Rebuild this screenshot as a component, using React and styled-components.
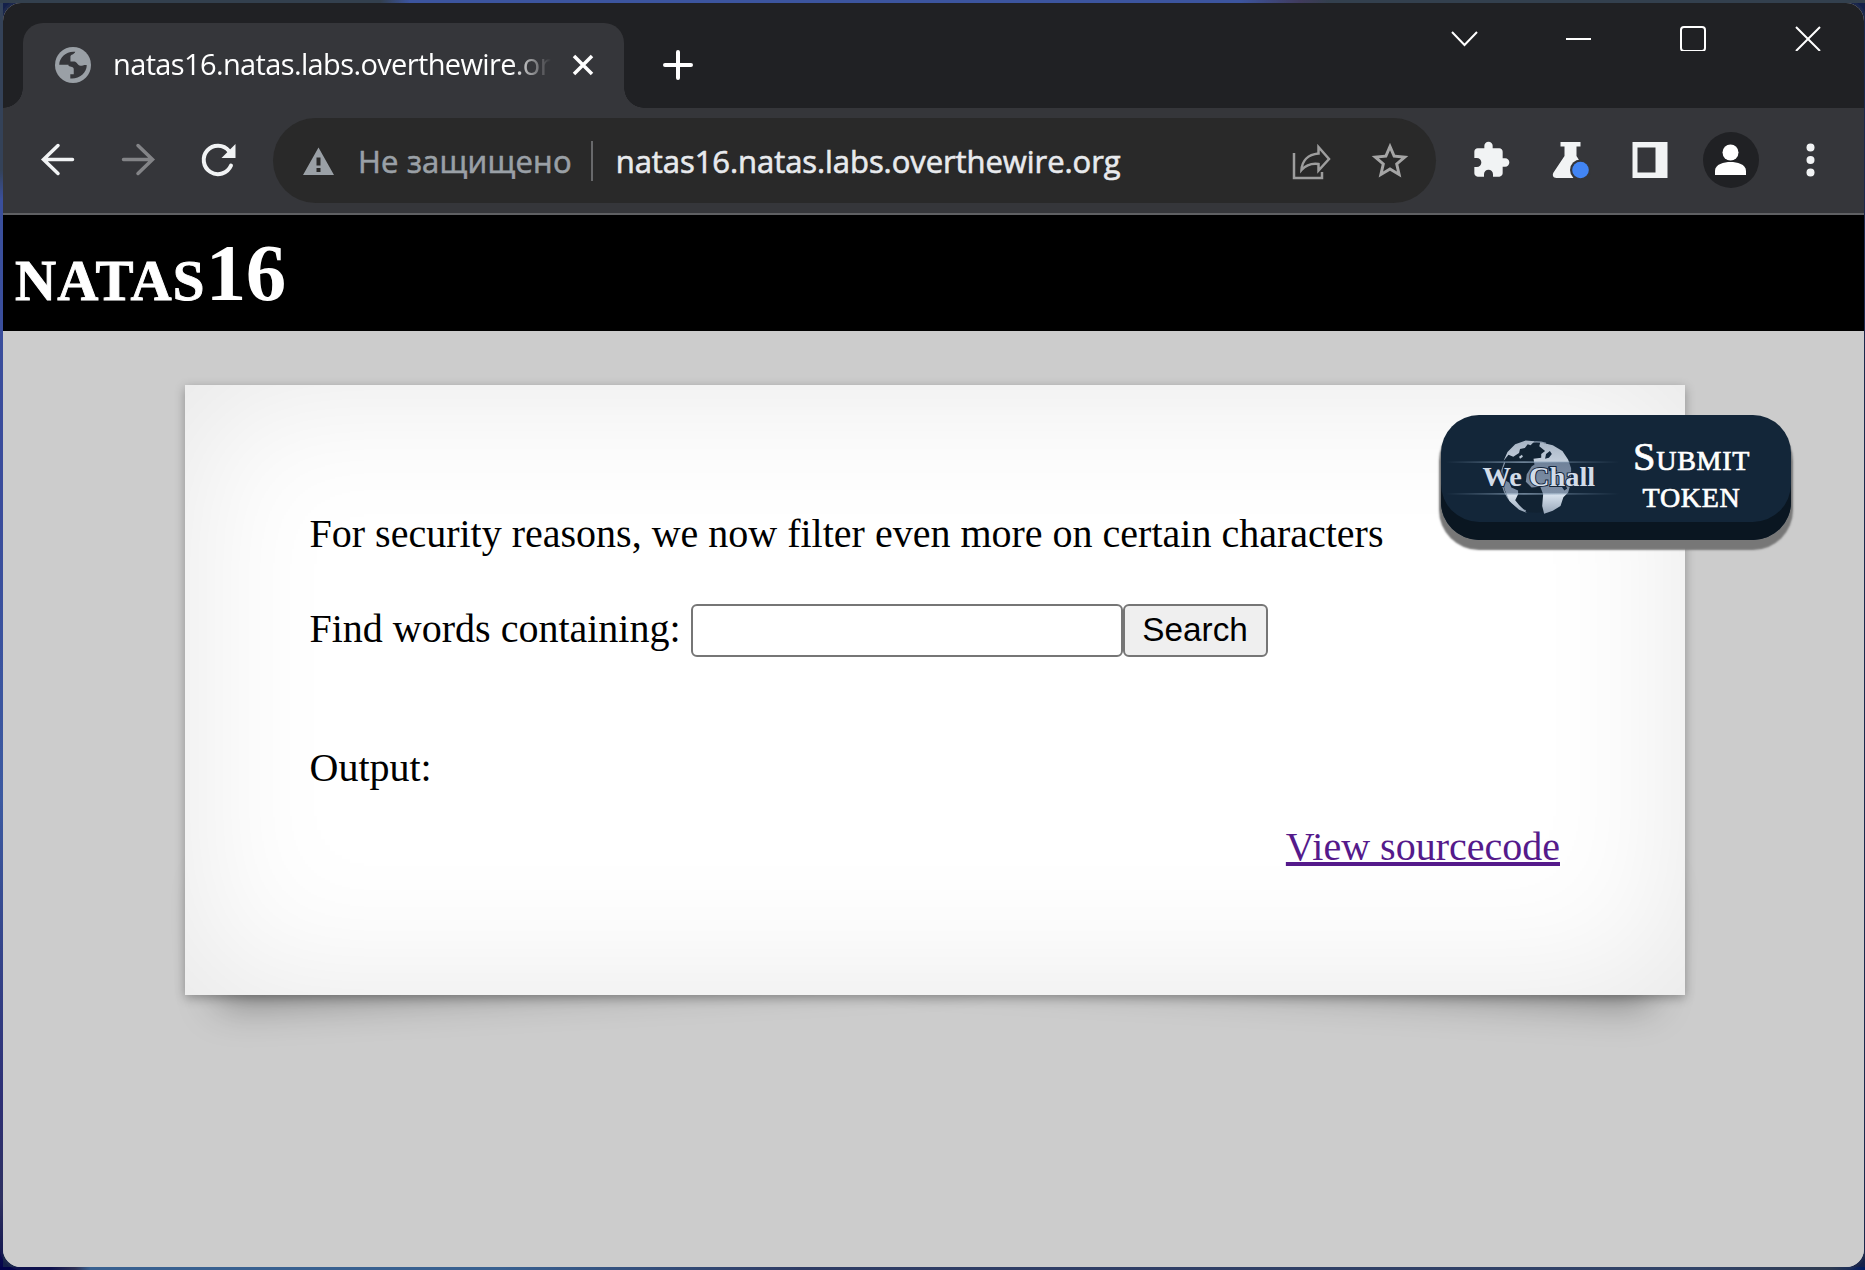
import React from 'react';
import styled, { createGlobalStyle } from 'styled-components';

const Global = createGlobalStyle`
  * { box-sizing: border-box; }
  body { margin: 0; }
`;

const Desktop = styled.div`
  height: 1270px;
  width: 1865px;
  padding: 3px 1px 3px 3px;
  overflow: hidden;
  background:
    linear-gradient(90deg, #33404c 0 380px, #3f5cb8 410px 1240px, #453a60 1300px, #33404c 1330px) 0 0 / 100% 3px no-repeat,
    linear-gradient(90deg, #02024a 0 50px, #2d2c55 75px, #3a6ba5 90px 500px, #2d3a6a 800px, #30446f 1700px, #2e3a50 1830px, #001a60) 0 100% / 100% 3px no-repeat,
    linear-gradient(180deg, #34435a 0 170px, #3d55b5 200px, #3c50b4 500px, #3f63bb 800px, #2c2a80 1100px, #2d2c66 1200px, #02024a) 0 0 / 3px 100% no-repeat,
    #14204a;
`;
const Window = styled.div`
  display: flex;
  flex-direction: column;
  height: 1264px;
  border-radius: 18px;
  overflow: hidden;
  background: #ccc;
  box-shadow: 0 0 0 3px #33405240;
`;
const TabStrip = styled.div`
  display: flex;
  height: 105px;
  padding: 20px 0 0 20px;
  background: #202124;
`;
const Tab = styled.div`
  position: relative;
  display: flex;
  align-items: center;
  width: 601px;
  height: 85px;
  padding: 0 29px 2px 32px;
  border-radius: 20px 20px 0 0;
  background: #35363a;
  &::before, &::after {
    content: '';
    position: absolute;
    bottom: 0;
    width: 20px;
    height: 20px;
  }
  &::before { left: -20px; background: radial-gradient(circle at 0 0, transparent 19.5px, #35363a 20px); }
  &::after { right: -20px; background: radial-gradient(circle at 100% 0, transparent 19.5px, #35363a 20px); }
`;
const TabTitle = styled.div`
  width: 442px;
  margin: -2px 17px 0 22px;
  overflow: hidden;
  white-space: nowrap;
  font: 29px/40px 'Open Sans', 'Noto Sans', sans-serif;
  letter-spacing: -0.63px;
  color: #fff;
  mask-image: linear-gradient(90deg, #000 398px, transparent 438px);
`;
const NewTab = styled.div`
  display: flex;
  align-items: center;
  margin-left: 38px;
  padding-bottom: 2px;
`;
const Controls = styled.div`
  display: flex;
  gap: 86px;
  height: 30px;
  margin: 0 43px 0 auto;
`;
const Toolbar = styled.div`
  display: flex;
  align-items: center;
  height: 107px;
  padding: 0 0 0 35px;
  background: #35363a;
  border-bottom: 2px solid #5f6063;
`;
const Nav = styled.div`
  display: flex;
  flex: none;
  gap: 40px;
  width: 235px;
  padding-bottom: 2px;
`;
const Omnibox = styled.div`
  display: flex;
  flex: none;
  align-items: center;
  width: 1163px;
  height: 85px;
  padding: 0 24px 0 25px;
  border-radius: 43px;
  background: #292929;
`;
const UrlText = styled.span`
  font: 31px/44px 'Open Sans', 'Noto Sans', sans-serif;
  letter-spacing: ${(p) => p.$spacing}px;
  color: ${(p) => p.$color};
  -webkit-text-stroke: 0.6px ${(p) => p.$color};
  white-space: nowrap;
`;
const Warning = styled.div`
  display: flex;
  width: 60px;
`;
const Separator = styled.div`
  width: 2px;
  height: 40px;
  margin: 0 23px 0 19px;
  background: #68696b;
`;
const OmniActions = styled.div`
  display: flex;
  align-items: center;
  gap: 37px;
  margin-left: auto;
`;
const Extensions = styled.div`
  display: flex;
  align-items: center;
  gap: 40px;
  margin-left: 35px;
  padding-bottom: 1px;
`;
const Avatar = styled.div`
  display: flex;
  width: 56px;
  height: 56px;
  margin: 0 -8px;
  border-radius: 50%;
  background: #202124;
`;
const Heading = styled.h1`
  height: 116px;
  margin: 0;
  padding-left: 12px;
  background: #000;
  color: #fff;
  font: bold 82px/115px 'Liberation Serif', serif;
  font-variant: small-caps;
  letter-spacing: 1.2px;
  -webkit-text-stroke: 0.9px #fff;
  text-transform: lowercase;
`;
const Level = styled.span`
  font-size: 81px;
  letter-spacing: -0.5px;
  -webkit-text-stroke: 0;
`;
const Page = styled.main`
  position: relative;
  z-index: 0;
  flex: 1;
  padding: 54px 179px 0 182px;
  background: #ccc;
`;
const Card = styled.section`
  position: relative;
  height: 610px;
  padding: 126px 125px 0 124.5px;
  background: #fff;
  font: 40px/46px 'Liberation Serif', serif;
  color: #000;
  box-shadow: 0 2.5px 10px rgba(0, 0, 0, 0.3), 0 0 150px rgba(0, 0, 0, 0.1) inset;
  &::before, &::after {
    content: '';
    position: absolute;
    z-index: -2;
    bottom: 37px;
    width: 50%;
    height: 20%;
    box-shadow: 0 27px 40px rgba(0, 0, 0, 0.38);
  }
  &::before { left: 30px; transform: rotate(-3deg); }
  &::after { right: 30px; transform: rotate(3deg); }
`;
const CardBody = styled.div`
  display: flex;
  flex-direction: column;
`;
const Form = styled.form`
  display: flex;
  align-items: center;
  margin-top: 47px;
`;
const FieldLabel = styled.label`
  padding-bottom: 3px;
`;
const Field = styled.input`
  width: 432px;
  height: 53px;
  margin-left: 10px;
  border: 2px solid #767676;
  border-radius: 6px;
  background: #fff;
`;
const Search = styled.button`
  width: 145px;
  height: 53px;
  padding: 0 0 2px;
  border: 2px solid #767676;
  border-radius: 6px;
  background: #efefef;
  color: #000;
  font: 33.33px/44px 'Liberation Sans', sans-serif;
`;
const Output = styled.div`
  margin-top: 88px;
`;
const Source = styled.a`
  align-self: flex-end;
  margin-top: 33px;
  color: #551a8b;
  text-decoration: underline;
`;
const Submit = styled.div`
  position: absolute;
  top: 84px;
  left: 1438px;
  z-index: 2;
  display: flex;
  align-items: center;
  width: 350px;
  height: 125px;
  border-radius: 38px;
  background: #132639;
  box-shadow: inset 0 -18px 0 #0a1621, 0 8px 2px 2px #777;
`;
const SubmitText = styled.div`
  width: 140px;
  margin: -5px 32px 0 auto;
  color: #fff;
  text-align: center;
  font: 40.5px/37px 'Liberation Serif', serif;
  font-variant: small-caps;
  letter-spacing: 0.7px;
  -webkit-text-stroke: 0.7px #fff;
`;

const Icon = ({ w = 40, h = w, box, children, ...rest }) => (
  <svg width={w} height={h} viewBox={box || `0 0 ${w} ${h}`} fill="none" {...rest}>{children}</svg>
);

const Logo = () => (
  <Icon w={190} h={105}>
    <defs>
      <linearGradient id="land" x1="0" y1="16" x2="0" y2="89" gradientUnits="userSpaceOnUse">
        <stop offset="0" stopColor="#a9b6c6" /><stop offset=".28" stopColor="#c3cedb" /><stop offset=".285" stopColor="#70829a" /><stop offset=".725" stopColor="#7f90a6" /><stop offset=".73" stopColor="#dbe5f0" /><stop offset="1" stopColor="#9aa9bb" />
      </linearGradient>
      <linearGradient id="flare" x1="5" x2="185" y1="0" y2="0" gradientUnits="userSpaceOnUse">
        <stop offset="0" stopColor="#7892ad" stopOpacity="0" /><stop offset=".45" stopColor="#93a9bf" stopOpacity=".7" /><stop offset="1" stopColor="#7892ad" stopOpacity="0" />
      </linearGradient>
    </defs>
    <circle cx="99" cy="52.500" r="36.500" fill="#10202f" fillOpacity=".6" />
    <path stroke="#8797aa" strokeWidth="1.200" d="M66 37a36.500 36.500 0 0 0 22 50M89 17a36.500 36.500 0 0 1 20 0" />
    <path fill="url(#land)" d="M65 35l4-9 8-8 11-4 9 1-4 4-3-1-3 4-5 1-1 4-6 4-5-2zM81 31l3-2 1 2-3 2zM103 16l13 3 10 6 6 9 3 9 0 14-3 11-5 5-3 9-8 5-9 3-2-8 1-12-3-8-9 1-6-6 1-8 5-8 3-2-1-6 8-1 0-4 4-3-6-5zM64 45l2 10 5 3 2 5 7 3 0 4-3 6 4 5 8 8-8-3-10-9-5-12-2-10z" />
    <path fill="#13263a" d="M109 28l4-3 2 3-3 4-4 1zM111 41l7 1 3 4-5-1-4 1zM124 60l4-2 3 6-3 2z" />
    <path stroke="url(#flare)" strokeWidth="1.800" d="M5 36.500h180M5 69.500h180" />
    <text x="43" y="61.500" fill="#d2dce8" stroke="#15253a" strokeWidth="2" paintOrder="stroke" fontFamily="'Liberation Serif', serif" fontWeight="bold" fontSize="28" textLength="117" lengthAdjust="spacingAndGlyphs">We Chall</text>
  </Icon>
);

export default function App() {
  return (
    <Desktop>
      <Global />
      <Window>
        <TabStrip>
          <Tab>
            <Icon w={36} box="0 0 24 24">
              <circle cx="12" cy="12" r="12" fill="#9aa0a6" />
              <path fill="#35363a" d="M2.800 11.800C3 6.500 8 2.500 13.500 3.200 13 5 10.300 5 10.300 6.500V9.700H13c1.500 0 2 2.800 4 2.800 1.500 0 3-.9 4.200-.3C21 17.500 16 21.600 10.200 21v-2.800h2.300v-3.400C12.500 13 10.500 13.500 9 12.500v-.7z" />
            </Icon>
            <TabTitle>natas16.natas.labs.overthewire.org</TabTitle>
            <Icon w={22}><path stroke="#fff" strokeWidth="3.5" d="M2 2l18 18M20 2L2 20" /></Icon>
          </Tab>
          <NewTab><Icon w={32}><path stroke="#fff" strokeWidth="4" strokeLinecap="round" d="M16 3v26M3 16h26" /></Icon></NewTab>
          <Controls>
            <Icon w={28}><path stroke="#fff" strokeWidth="2" d="M1 9l12.500 13L26 9" /></Icon>
            <Icon w={28}><path stroke="#fff" strokeWidth="2" d="M1 16h25" /></Icon>
            <Icon w={28}><rect x="2" y="4" width="24" height="24" rx="3" stroke="#fff" strokeWidth="2" /></Icon>
            <Icon w={28}><path stroke="#fff" strokeWidth="2" d="M3 4l24 24M27 4L3 28" /></Icon>
          </Controls>
        </TabStrip>
        <Toolbar>
          <Nav>
            <Icon w={40}><path stroke="#f1f3f4" strokeWidth="3.500" strokeLinecap="round" d="M34.500 19.500H6M20 5.500l-14.500 14L20 33.500" /></Icon>
            <Icon w={40}><path stroke="#838487" strokeWidth="3.500" strokeLinecap="round" d="M5.500 19.500H34M20 5.500l14.500 14L20 33.500" /></Icon>
            <Icon w={40}><path stroke="#f1f3f4" strokeWidth="4" strokeLinecap="round" d="M31 11A14.200 14.200 0 1 0 33 25.500" /><path fill="#f1f3f4" d="M37.500 4v14h-14z" /></Icon>
          </Nav>
          <Omnibox>
            <Warning><Icon w={40}><path fill="#9aa0a6" fillRule="evenodd" d="M20.500 6.500L36 34H5zM18.500 16.500v8h4v-8zm0 10.500v4h4v-4z" /></Icon></Warning>
            <UrlText $color="#9aa0a6" $spacing={0.2}>Не защищено</UrlText>
            <Separator />
            <UrlText $color="#e8eaed" $spacing={-0.07}>natas16.natas.labs.overthewire.org</UrlText>
            <OmniActions>
              <Icon w={40}><path stroke="#9d9d9d" strokeWidth="2.500" d="M3 12v25h28v-6M27.500 6l10.500 12-10.500 11.500V23C20 22 15 24 10.500 29c.5-9 6-15.500 17-16.500z" /></Icon>
              <Icon w={44} box="0 0 24 24"><path fill="#a5a5a5" d="M22 9.240l-7.190-.62L12 2 9.190 8.630 2 9.240l5.460 4.730L5.820 21 12 17.270 18.180 21l-1.630-7.030zM12 15.400l-3.760 2.270 1-4.280-3.320-2.880 4.380-.38L12 6.100l1.710 4.040 4.380.38-3.320 2.880 1 4.280z" /></Icon>
            </OmniActions>
          </Omnibox>
          <Extensions>
            <Icon w={40} box="0 0 24 24"><path fill="#f1f3f4" d="M20.500 11H19V7c0-1.100-.9-2-2-2h-4V3.500a2.500 2.500 0 0 0-5 0V5H4c-1.100 0-2 .9-2 2v3.800h1.500a2.700 2.700 0 0 1 0 5.400H2V20c0 1.100.9 2 2 2h3.800v-1.500a2.700 2.700 0 0 1 5.400 0V22H17c1.100 0 2-.9 2-2v-4h1.500a2.500 2.500 0 0 0 0-5z" /></Icon>
            <Icon w={40}><path fill="#f1f3f4" d="M9.500 2h20v4.500h-4V16l10 16c1.500 3 0 6-3 6H5.500c-3.500 0-4.500-3-3-5.500l11-16.500V6.500h-4z" /><circle cx="29.500" cy="30" r="10.500" fill="#35363a" /><circle cx="29.500" cy="30" r="8.300" fill="#4285f4" /></Icon>
            <Icon w={40}><path fill="#f1f3f4" fillRule="evenodd" d="M1.500 2h35v36h-35zM6.500 7.500v25h18v-25z" /></Icon>
            <Avatar><Icon w={56}><circle cx="27.500" cy="20.500" r="8" fill="#fff" /><path fill="#fff" d="M12 43v-4c0-7 9-9 15.500-9s15.500 2 15.500 9v4z" /></Icon></Avatar>
            <Icon w={40}><g fill="#f1f3f4"><circle cx="19.500" cy="7.500" r="4" /><circle cx="19.500" cy="20" r="4" /><circle cx="19.500" cy="32.500" r="4" /></g></Icon>
          </Extensions>
        </Toolbar>
        <Heading>natas<Level>16</Level></Heading>
        <Page>
          <Card>
            <CardBody>
              <div>For security reasons, we now filter even more on certain characters</div>
              <Form><FieldLabel htmlFor="needle">Find words containing:</FieldLabel><Field id="needle" /><Search type="button">Search</Search></Form>
              <Output>Output:</Output>
              <Source>View sourcecode</Source>
            </CardBody>
          </Card>
          <Submit><Logo /><SubmitText>Submit token</SubmitText></Submit>
        </Page>
      </Window>
    </Desktop>
  );
}
